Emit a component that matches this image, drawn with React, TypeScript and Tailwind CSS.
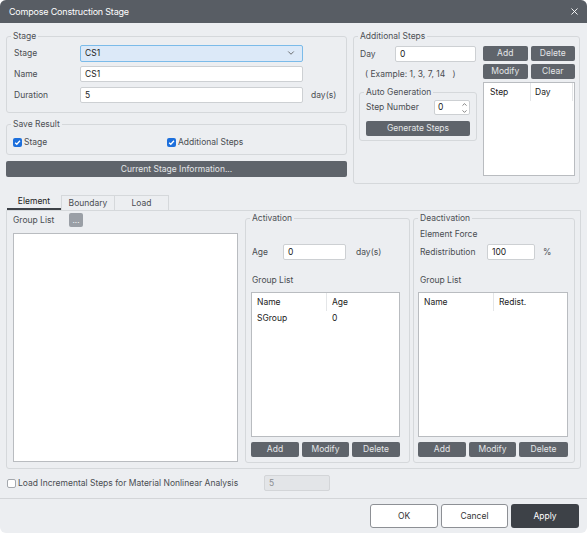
import { ChevronDown, ChevronUp, X } from "lucide-react";

const Btn = ({
  children,
  className = "",
}: {
  children: React.ReactNode;
  className?: string;
}) => (
  <button
    className={`flex items-center justify-center rounded-[2px] bg-[#5f646b] text-[8.5px] leading-none text-[#e4e6e8] ${className}`}
  >
    {children}
  </button>
);

const Group = ({
  title,
  className = "",
  inner = "",
  children,
}: {
  title: string;
  className?: string;
  inner?: string;
  children?: React.ReactNode;
}) => (
  <fieldset className={`rounded-[3px] border border-[#d5d8db] ${className}`}>
    <legend className="ml-[4px] px-[2px] text-[8.5px] leading-[14px] text-[#4d5055]">
      {title}
    </legend>
    <div className={inner}>{children}</div>
  </fieldset>
);

const Input = ({
  value,
  className = "",
}: {
  value: string;
  className?: string;
}) => (
  <div
    className={`flex h-[16px] items-center rounded-[2px] border border-[#cdd0d3] bg-white px-[4px] text-[8.5px] text-[#222] ${className}`}
  >
    {value}
  </div>
);

const Check = ({ checked }: { checked: boolean }) =>
  checked ? (
    <span className="flex h-[9px] w-[9px] items-center justify-center rounded-[2px] bg-[#1d6fdc]">
      <svg width="7" height="7" viewBox="0 0 8 8">
        <path
          d="M1.3 4.2 3.2 6 6.8 2"
          fill="none"
          stroke="white"
          strokeWidth="1.5"
        />
      </svg>
    </span>
  ) : (
    <span className="h-[9px] w-[9px] rounded-[2px] border border-[#a4a8ad] bg-white" />
  );

const Table = ({
  cols,
  rows = [],
  split,
  className = "",
}: {
  cols: string[];
  rows?: string[][];
  split: number;
  className?: string;
}) => (
  <div
    className={`border border-[#b9bcc0] bg-white text-[8.5px] text-[#222] ${className}`}
  >
    <div className="flex h-[18px] items-center">
      <div
        className="flex h-full items-center border-r border-[#e4e6e8] pl-[5px]"
        style={{ width: split }}
      >
        {cols[0]}
      </div>
      <div className="pl-[5px]">{cols[1]}</div>
    </div>
    {rows.map((r) => (
      <div key={r[0]} className="flex h-[14px] items-center">
        <div className="pl-[5px]" style={{ width: split }}>
          {r[0]}
        </div>
        <div className="pl-[5px]">{r[1]}</div>
      </div>
    ))}
  </div>
);

export default function App() {
  return (
    <div
      className="h-[533px] w-[587px] bg-white text-[8.5px] text-[#4a4d52]"
      style={{ fontFamily: "Inter, 'Liberation Sans', sans-serif" }}
    >
      <div className="flex h-full flex-col overflow-hidden rounded-[6px] bg-[#eceef1]">
        {/* Title */}
        <div className="flex h-[23px] items-center justify-between bg-[#585d64] pl-[9px] pr-[7px] text-[9px] tracking-[-0.2px] text-white">
          <span>Compose Construction Stage</span>
          <X size={11} strokeWidth={2} />
        </div>

        {/* Top */}
        <div className="flex gap-[6px] px-[6px] pt-[6px]">
          <div className="flex w-[341px] flex-col">
            <Group
              title="Stage"
              inner="flex flex-col gap-[5px] px-[7px] pb-[9px] pt-[2px]"
            >
              <div className="flex h-[16px] items-center">
                <span className="w-[66px]">Stage</span>
                <div className="flex h-[17px] w-[223px] items-center justify-between rounded-[2px] border border-[#7bbbe9] bg-[#dce9f8] pl-[4px] pr-[6px] text-[#222]">
                  CS1
                  <ChevronDown size={10} strokeWidth={2} color="#555" />
                </div>
              </div>
              <div className="flex h-[16px] items-center">
                <span className="w-[66px]">Name</span>
                <Input value="CS1" className="w-[223px]" />
              </div>
              <div className="flex h-[16px] items-center">
                <span className="w-[66px]">Duration</span>
                <Input value="5" className="w-[223px]" />
                <span className="ml-[8px]">day(s)</span>
              </div>
            </Group>
            <Group
              title="Save Result"
              className="mt-[4px]"
              inner="flex h-[14px] items-center mx-[6px] mb-[5px] mt-[4px]"
            >
              <div className="flex w-[154px] items-center gap-[2px]">
                <Check checked />
                Stage
              </div>
              <div className="flex items-center gap-[2px]">
                <Check checked />
                Additional Steps
              </div>
            </Group>
            <Btn className="mt-[6px] h-[16px] w-full">
              Current Stage Information...
            </Btn>
          </div>

          <Group
            title="Additional Steps"
            className="h-[155px] w-[227px]"
            inner="flex gap-[6px] pl-[5px] pr-[4px] pt-[3px]"
          >
            <div className="flex w-[118px] flex-col">
              <div className="flex h-[16px] items-center">
                <span className="ml-[1px] w-[35px]">Day</span>
                <Input value="0" className="w-[81px]" />
              </div>
              <div className="mt-[6px] h-[14px] whitespace-pre pl-[6px]">
                {"( Example: 1, 3, 7, 14   )"}
              </div>
              <Group
                title="Auto Generation"
                className="mt-[3px]"
                inner="px-[6px] pb-[4px] pt-[1px]"
              >
                <div className="flex h-[15px] items-center justify-between">
                  <span>Step Number</span>
                  <div className="flex h-[15px] w-[36px] items-center justify-between rounded-[2px] border border-[#cdd0d3] bg-white pl-[3px] pr-[1px] text-[#222]">
                    0
                    <div className="flex flex-col">
                      <ChevronUp size={7} strokeWidth={2.5} color="#555" />
                      <ChevronDown size={7} strokeWidth={2.5} color="#555" />
                    </div>
                  </div>
                </div>
                <Btn className="mt-[6px] h-[15px] w-full">Generate Steps</Btn>
              </Group>
            </div>
            <div className="flex w-[92px] flex-col">
              <div className="grid grid-cols-2 gap-[3px]">
                <Btn className="h-[15px]">Add</Btn>
                <Btn className="h-[15px]">Delete</Btn>
                <Btn className="h-[15px]">Modify</Btn>
                <Btn className="h-[15px]">Clear</Btn>
              </div>
              <div className="mt-[3px] flex h-[94px] border border-[#b9bcc0] bg-white text-[#222]">
                <div className="flex h-[18px] w-full items-center">
                  <div className="flex h-full w-[47px] items-center border-r border-[#e4e6e8] pl-[6px]">
                    Step
                  </div>
                  <div className="flex h-full w-[42px] items-center border-r border-[#e4e6e8] pl-[4px]">
                    Day
                  </div>
                </div>
              </div>
            </div>
          </Group>
        </div>

        {/* Tabs */}
        <div className="ml-[7px] mt-[11px] flex h-[15px]">
          <div className="flex w-[54px] items-center justify-center border-b-2 border-[#3d4147] text-[#222]">
            Element
          </div>
          <div className="flex w-[54px] items-center justify-center border border-b-0 border-[#d5d8db]">
            Boundary
          </div>
          <div className="flex w-[54px] items-center justify-center border border-b-0 border-l-0 border-[#d5d8db]">
            Load
          </div>
        </div>
        <div className="mx-[6px] flex h-[259px] gap-[7px] rounded-b-[3px] border border-[#d5d8db] pl-[6px] pr-[4px]">
          <div className="flex w-[225px] flex-col pt-[2px]">
            <div className="flex h-[14px] items-center">
              <span className="w-[56px]">Group List</span>
              <div className="flex h-[14px] w-[14px] items-end justify-center rounded-[2px] bg-[#9a9fa6] pb-[3px] text-[8px] leading-none text-white">
                ...
              </div>
            </div>
            <div className="mt-[6px] h-[229px] border border-[#b9bcc0] bg-white" />
          </div>

          <Group
            title="Activation"
            className="mb-[5px] w-[165px]"
            inner="pl-[5px] pt-[2px]"
          >
            <div className="h-[14px]" />
            <div className="mt-[3px] flex h-[16px] items-center">
              <span className="ml-[1px] w-[31px]">Age</span>
              <Input value="0" className="w-[63px]" />
              <span className="ml-[10px]">day(s)</span>
            </div>
            <div className="mt-[13px] flex h-[14px] items-center pl-[1px]">
              Group List
            </div>
            <Table
              cols={["Name", "Age"]}
              rows={[["SGroup", "0"]]}
              split={75}
              className="mt-[5px] h-[145px] w-[149px]"
            />
            <div className="mt-[5px] flex w-[149px] gap-[3px]">
              <Btn className="h-[15px] w-[48px]">Add</Btn>
              <Btn className="h-[15px] w-[47px]">Modify</Btn>
              <Btn className="h-[15px] w-[48px]">Delete</Btn>
            </div>
          </Group>

          <Group
            title="Deactivation"
            className="mb-[5px] ml-[-4px] w-[162px]"
            inner="pl-[4px] pt-[2px]"
          >
            <div className="flex h-[14px] items-center pl-[2px]">
              Element Force
            </div>
            <div className="mt-[3px] flex h-[16px] items-center">
              <span className="ml-[2px] w-[67px]">Redistribution</span>
              <Input value="100" className="w-[48px]" />
              <span className="ml-[8px]">%</span>
            </div>
            <div className="mt-[13px] flex h-[14px] items-center pl-[2px]">
              Group List
            </div>
            <Table
              cols={["Name", "Redist."]}
              split={75}
              className="mt-[5px] h-[145px] w-[150px]"
            />
            <div className="mt-[5px] flex w-[150px] gap-[3px]">
              <Btn className="h-[15px] w-[48px]">Add</Btn>
              <Btn className="h-[15px] w-[47px]">Modify</Btn>
              <Btn className="h-[15px] w-[49px]">Delete</Btn>
            </div>
          </Group>
        </div>

        {/* Load incremental */}
        <div className="mt-[6px] flex h-[16px] items-center pl-[7px]">
          <div className="flex w-[257px] items-center gap-[2px]">
            <Check checked={false} />
            Load Incremental Steps for Material Nonlinear Analysis
          </div>
          <div className="flex h-[16px] w-[66px] items-center rounded-[2px] border border-[#d3d5d8] bg-[#e3e5e8] pl-[4px] text-[#8b8e92]">
            5
          </div>
        </div>

        <div className="mt-[7px] border-t border-[#d3d5d8]" />

        <div className="flex justify-end gap-[3px] pr-[8px] pt-[5px]">
          <button className="flex h-[24px] w-[68px] items-center justify-center rounded-[3px] border border-[#8d9095] bg-white text-[#333]">
            OK
          </button>
          <button className="flex h-[24px] w-[67px] items-center justify-center rounded-[3px] border border-[#8d9095] bg-white text-[#333]">
            Cancel
          </button>
          <button className="flex h-[24px] w-[68px] items-center justify-center rounded-[3px] bg-[#3d4147] text-white">
            Apply
          </button>
        </div>
      </div>
    </div>
  );
}
